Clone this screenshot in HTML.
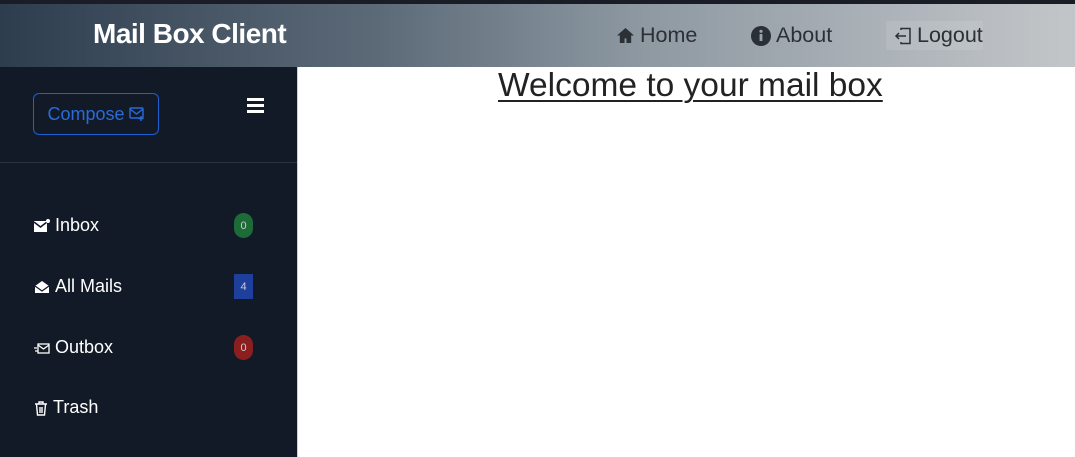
<!DOCTYPE html>
<html><head><style>
body{margin:0;width:1075px;height:457px;overflow:hidden;font-family:"Liberation Sans",sans-serif;background:#fff;position:relative}
.top{position:absolute;left:0;top:0;width:1075px;height:4px;background:#1a1c26}
.hdr{position:absolute;left:0;top:4px;width:1075px;height:63px;background:linear-gradient(90deg,#2e3d4e 0%,#5c6a78 35%,#8e99a2 60%,#c3c6c9 100%)}
.brand{position:absolute;left:93px;top:14px;color:#fff;font-weight:bold;font-size:28px;letter-spacing:-0.5px}
.nav{position:absolute;top:19px;color:#2b2f36;font-size:21.5px;display:flex;align-items:center;gap:5px}
.side{position:absolute;left:0;top:67px;width:297px;height:390px;background:#121a28;border-right:1px solid #d0d0d0}
.comp{position:absolute;left:33px;top:26px;width:126px;height:42px;border:1px solid #1f5fd1;border-radius:6px;color:#2a6bd8;font-size:18px;display:flex;align-items:center;justify-content:center;gap:4px;box-sizing:border-box}
.div{position:absolute;left:0;top:95px;width:297px;height:1px;background:#2c3442}
.item{position:absolute;left:34px;color:#fff;font-size:18px;display:flex;align-items:center;gap:5px}
.badge{position:absolute;left:234px;width:19px;height:25px;font-size:11px;color:#ccc;display:flex;align-items:center;justify-content:center}
h1{position:absolute;left:498px;top:67px;margin:0;font-size:33.5px;font-weight:normal;color:#222;text-decoration:underline;text-decoration-thickness:2px;text-underline-offset:4px}
</style></head><body>
<div class="top"></div>
<div class="hdr">
<div class="brand">Mail Box Client</div>
<div class="nav" style="left:616px"><svg width="19" height="17" viewBox="0 0 20 18"><path d="M10 1L1 9h3v8h5v-5h2v5h5V9h3z" fill="#2b2f36"/></svg>Home</div>
<div class="nav" style="left:751px"><svg width="20" height="20" viewBox="0 0 20 20"><circle cx="10" cy="10" r="10" fill="#2b2f36"/><rect x="8.6" y="8" width="2.8" height="7" fill="#9aa3aa"/><circle cx="10" cy="5.3" r="1.6" fill="#9aa3aa"/></svg>About</div>
<div class="nav" style="left:886px;background:rgba(255,255,255,0.1);padding:2px 0 2px 8px;top:17px"><svg width="18" height="18" viewBox="0 0 18 18" fill="none" stroke="#2b2f36" stroke-width="1.5"><path d="M7 3V1.5h9v15H7V15"/><path d="M12 9H2M5 6L2 9l3 3"/></svg>Logout</div>
</div>
<div class="side">
<div class="comp">Compose <svg width="16" height="14" viewBox="0 0 16 14" fill="none" stroke="#2a6bd8" stroke-width="1.4"><rect x="1" y="1" width="13" height="10" rx="1"/><path d="M1 2l6.5 5L14 2M12 9v5M9.5 11.5h5"/></svg></div>
<div style="position:absolute;left:247px;top:31px;width:17px"><div style="height:3px;background:#fff;margin-bottom:3px"></div><div style="height:3px;background:#fff;margin-bottom:3px"></div><div style="height:3px;background:#fff"></div></div>
<div class="div"></div>
<div class="item" style="top:148px"><svg width="16" height="14" viewBox="0 0 16 14"><rect x="0" y="2" width="13" height="11" fill="#fff"/><path d="M0 3l6.5 5L13 3" stroke="#121a28" stroke-width="1.5" fill="none"/><circle cx="14" cy="2" r="2" fill="#fff"/></svg>Inbox</div>
<div class="badge" style="top:146px;background:#1d6b36;border-radius:10px">0</div>
<div class="item" style="top:209px"><svg width="16" height="14" viewBox="0 0 16 14"><path d="M1 6L8 1l7 5v7H1z" fill="#fff"/><path d="M1 6l7 5 7-5" stroke="#121a28" stroke-width="1.3" fill="none"/></svg>All Mails</div>
<div class="badge" style="top:207px;background:#1f3f9c;width:19px">4</div>
<div class="item" style="top:270px"><svg width="16" height="14" viewBox="0 0 16 14" fill="none" stroke="#fff" stroke-width="1.3"><rect x="4" y="3" width="11" height="9"/><path d="M4 4l5.5 4L15 4M0 7h3M1 10h3"/></svg>Outbox</div>
<div class="badge" style="top:268px;background:#8b1f1f;border-radius:10px">0</div>
<div class="item" style="top:330px"><svg width="14" height="16" viewBox="0 0 14 16" fill="none" stroke="#fff" stroke-width="1.4"><path d="M1 4h12M5 4V2h4v2M2.5 4l1 11h7l1-11M6 7v6M8 7v6"/></svg>Trash</div>
</div>
<h1>Welcome to your mail box</h1>
</body></html>
